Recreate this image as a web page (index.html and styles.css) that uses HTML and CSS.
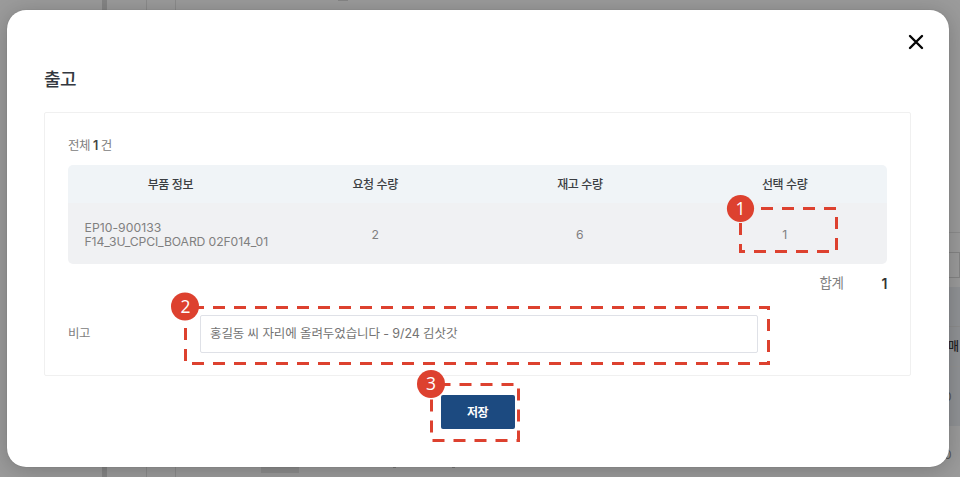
FILE: index.html
```html
<!DOCTYPE html>
<html lang="ko">
<head>
<meta charset="utf-8">
<title>출고</title>
<link rel="stylesheet" href="styles.css">
</head>
<body>
<div class="backdrop">
  <i class="rail"></i><i class="line line-a"></i><i class="line line-b"></i>
  <i class="tab"></i><i class="speck speck-a"></i><i class="speck speck-b"></i><i class="speck speck-c"></i>
  <i class="rule rule-a"></i><i class="box"></i><i class="band"></i><i class="rule rule-b"></i><i class="rule rule-c"></i>
  <span class="peek peek-head">매</span><span class="peek peek-one">0</span><span class="peek peek-two">0</span>
</div>
<main class="modal">
  <header class="modal-head">
    <h1>출고</h1>
    <button class="close" aria-label="닫기"><svg width="16" height="16" viewBox="0 0 16 16"><path d="M2 2L14 14M14 2L2 14"/></svg></button>
  </header>
  <section class="panel">
    <p class="count">전체 <b>1</b> 건</p>
    <div class="table">
      <div class="row head"><span>부품 정보</span><span>요청 수량</span><span>재고 수량</span><span>선택 수량</span></div>
      <div class="row body"><span class="part"><span class="code">EP10-900133</span><br><span class="name">F14_3U_CPCI_BOARD 02F014_01</span></span><span>2</span><span>6</span><span>1</span></div>
    </div>
    <div class="total"><span>합계</span><b>1</b></div>
    <div class="note"><label>비고</label><div class="field"><span>홍길동 씨 자리에 올려두었습니다 - 9/24 김삿갓</span></div></div>
  </section>
  <footer><button class="save">저장</button></footer>
</main>
<svg class="callouts" width="960" height="477" viewBox="0 0 960 477">
  <g class="dash">
    <path d="M740 208.5H836.5V251.5H740.5V208.5"/>
    <path stroke-dashoffset="-6.5" d="M185.5 307.5H768.5V363.5H185.5V307.5"/>
    <path stroke-dashoffset="-7" d="M431.5 384.5H518.5V440.5H431.5V384.5"/>
  </g>
  <g class="badge">
    <circle cx="740.5" cy="208.5" r="13.6"/><circle cx="185" cy="306.5" r="14"/><circle cx="431" cy="384" r="14"/>
    <text x="740.5" y="215">1</text><text x="185.5" y="313">2</text><text x="431" y="390">3</text>
  </g>
</svg>
</body>
</html>
```
FILE: styles.css
```css
* { box-sizing: border-box; }
body {
  margin: 0;
  width: 960px;
  height: 477px;
  overflow: hidden;
  background: #9b9b9b;
  font-family: Inter, "Noto Sans CJK KR", sans-serif;
  color: #808080;
}
h1, p { margin: 0; }
button { padding: 0; border: 0; font-family: inherit; }

.backdrop { position: absolute; inset: 0; overflow: hidden; }
.backdrop > * { position: absolute; }
.rail { left: 102px; top: 0; width: 5px; height: 477px; background: #858585; }
.line { top: 0; width: 1px; height: 477px; background: #8b8b8b; }
.line-a { left: 146px; }
.line-b { left: 175px; }
.tab { left: 261px; top: 460px; width: 38px; height: 13px; background: #8d8d8d; }
.speck { height: 1px; background: #777; }
.speck-a { left: 338px; top: 0; width: 10px; background: #858585; }
.speck-b { left: 393px; top: 467px; width: 3px; }
.speck-c { left: 452px; top: 467px; width: 3px; }
.rule { left: 940px; width: 20px; height: 1px; background: #8c8c8c; }
.rule-a { top: 232px; }
.rule-b { top: 326px; }
.rule-c { top: 366px; background: #929292; }
.box { left: 930px; top: 252px; width: 30px; height: 26px; border: 1px solid #848484; }
.band { left: 930px; top: 287px; width: 30px; height: 139px; background: #909295; }
.peek { font-size: 12px; line-height: 16px; color: #555; }
.peek-head { left: 948px; top: 339px; font-weight: 500; color: #222; }
.peek-one { left: 944px; top: 389px; }
.peek-two { left: 944px; top: 447px; }

.modal {
  position: relative;
  width: 942px;
  height: 457px;
  margin: 9.5px 0 0 6.5px;
  padding: 23.5px 37.5px 0;
  border-radius: 19px;
  background: #fff;
  box-shadow: 0 0 1px rgba(0,0,0,.3), 0 3px 22px rgba(0,0,0,.22);
}
.modal-head { display: flex; justify-content: space-between; height: 79px; }
h1 { margin-top: 34px; font-size: 18px; line-height: 26px; font-weight: 500; letter-spacing: -.6px; color: #333840; }
.close { width: 16px; height: 16px; margin: 1px -13px 0 0; background: none; }
.close svg { display: block; fill: none; stroke: #050505; stroke-width: 2.4; stroke-linecap: round; }
.panel { width: 867px; height: 264px; padding: 23px 23px 0; border: 1px solid #f0f0f0; border-radius: 2px; }
.count { font-size: 12.5px; line-height: 20px; letter-spacing: -.5px; }
.count b { font-weight: 600; color: #444; }
.table { margin-top: 9px; overflow: hidden; border-radius: 5px; }
.row { display: grid; grid-template-columns: repeat(4, minmax(0, 1fr)); align-items: center; text-align: center; }
.head { height: 38px; padding-bottom: 2px; background: #f0f4f7; color: #3b3e42; font-size: 12px; font-weight: 500; letter-spacing: -.4px; }
.body { height: 61px; padding-top: 3px; background: #f0f1f3; font-size: 12.2px; line-height: 14px; }
.part { padding-left: 16.5px; text-align: left; white-space: nowrap; }
.code { letter-spacing: .05px; }
.name { letter-spacing: -.12px; }
.total { display: flex; justify-content: flex-end; gap: 38px; height: 40px; font-size: 13.5px; line-height: 39px; letter-spacing: -.4px; }
.total b { font-size: 14px; font-weight: 600; color: #333; }
.note { display: flex; align-items: center; margin-top: 10.5px; font-size: 12.5px; letter-spacing: -.4px; }
.note label { width: 131.5px; padding-bottom: 2px; }
.field { display: flex; align-items: center; width: 558px; height: 38px; padding: 0 0 2px 9.5px; border: 1px solid #dfe1e7; border-radius: 2px; color: #737373; letter-spacing: -.1px; }
footer { display: flex; padding: 19px 0 0 396.5px; }
.save { width: 74px; height: 34px; padding-bottom: 2px; border-radius: 2px; background: #1c4a80; color: #fff; font-size: 12px; font-weight: 700; letter-spacing: -.6px; }

.callouts { position: absolute; left: 0; top: 0; }
.dash { fill: none; stroke: #dd412f; stroke-width: 3; stroke-dasharray: 12 9; }
.badge circle { fill: #dd412f; }
.badge text { fill: #fff; font: 400 17.5px "Open Sans", sans-serif; text-anchor: middle; }
```
